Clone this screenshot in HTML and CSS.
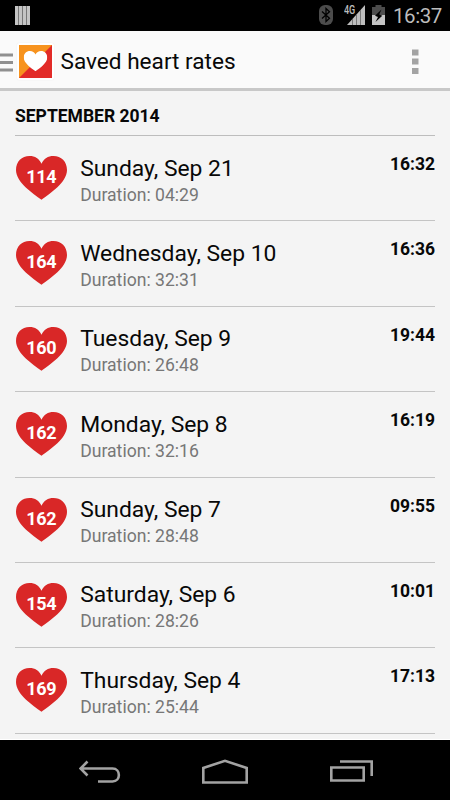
FILE: index.html
```html
<!DOCTYPE html>
<html lang="en">
<head>
  <meta charset="UTF-8" />
  <meta name="viewport" content="width=device-width, initial-scale=1" />
  <title>Saved heart rates</title>
  <link rel="stylesheet" href="styles.css">
</head>
<body>

  <svg class="defs" width="0" height="0">
    <symbol id="heart" viewBox="0 0 51 44">
      <path d="M25.5 43.7C17 37.5 0 26.500 0 14C0 5.500 5.800 0 13.500 0C19 0 23.300 2.600 25.500 7.800C27.700 2.600 32 0 37.500 0C45.200 0 51 5.500 51 14C51 26.500 34 37.500 25.500 43.700Z" />
    </symbol>
  </svg>

  <div class="status-bar">
    <svg class="bars" width="15" height="19" viewBox="0 0 15 19">
      <path fill="#777" d="M0 0h15v19H0z" />
      <path fill="#c4c4c4" d="M0 0h3v19H0zM4 0h3v19H4zM8 0h3v19H8zM12 0h3v19h-3z" />
    </svg>
    <svg class="bluetooth" width="14" height="20" viewBox="0 0 14 20">
      <rect width="14" height="20" rx="6" fill="#4c4c4c" />
      <path d="M3 6.500L10.500 13.200L7 16.500V3.500L10.500 6.800L3 13.500" fill="none" stroke="#000" stroke-width="1.300" />
    </svg>
    <div class="signal">
      <span class="network">4G</span>
      <svg width="18" height="20" viewBox="0 0 18 20">
        <path fill="#bdbdbd" d="M18 0V20H0Z" />
        <path stroke="#777" d="M5.500 14V20M9.500 10V20M13.500 5V20" />
      </svg>
    </div>
    <svg class="battery" width="13" height="20" viewBox="0 0 13 20">
      <path fill="#4c4c4c" d="M3.500 0h6v2H13v8H0V2h3.500z" />
      <path fill="#c4c4c4" d="M0 10h13v10H0z" />
      <path d="M9.500 4.500L3 10.800L6 12L3.500 17L10.300 10.700L7.200 9.500Z" />
    </svg>
    <span class="clock">16:37</span>
  </div>

  <div class="action-bar">
    <svg class="drawer" width="13" height="19" viewBox="0 0 13 19">
      <path fill="#909090" d="M0 0.500h13v3H0zM0 8h13v3H0zM0 15.500h13v3H0z" />
    </svg>
    <div class="logo">
      <svg width="33" height="33" viewBox="0 0 33 33">
        <path fill="#e22b28" d="M0 0h33v33H0z" />
        <path fill="#f7931e" d="M0 0h33L0 33z" />
        <use href="#heart" x="4.700" y="6" width="23.600" height="20.300" fill="#fff" />
      </svg>
    </div>
    <h1>Saved heart rates</h1>
    <svg class="overflow" width="7" height="26" viewBox="0 0 7 26">
      <path fill="#a3a3a3" d="M0 0.500h6.500v6H0zM0 9.500h6.500v6H0zM0 19h6.500v6H0z" />
    </svg>
  </div>

  <div class="list">
    <h2>SEPTEMBER 2014</h2>

    <div class="item">
      <div class="rate"><svg><use href="#heart" /></svg><span>114</span></div>
      <div class="info"><p class="day">Sunday, Sep 21</p><p class="duration">Duration: 04:29</p></div>
      <span class="time">16:32</span>
    </div>
    <div class="item">
      <div class="rate"><svg><use href="#heart" /></svg><span>164</span></div>
      <div class="info"><p class="day">Wednesday, Sep 10</p><p class="duration">Duration: 32:31</p></div>
      <span class="time">16:36</span>
    </div>
    <div class="item">
      <div class="rate"><svg><use href="#heart" /></svg><span>160</span></div>
      <div class="info"><p class="day">Tuesday, Sep 9</p><p class="duration">Duration: 26:48</p></div>
      <span class="time">19:44</span>
    </div>
    <div class="item">
      <div class="rate"><svg><use href="#heart" /></svg><span>162</span></div>
      <div class="info"><p class="day">Monday, Sep 8</p><p class="duration">Duration: 32:16</p></div>
      <span class="time">16:19</span>
    </div>
    <div class="item">
      <div class="rate"><svg><use href="#heart" /></svg><span>162</span></div>
      <div class="info"><p class="day">Sunday, Sep 7</p><p class="duration">Duration: 28:48</p></div>
      <span class="time">09:55</span>
    </div>
    <div class="item">
      <div class="rate"><svg><use href="#heart" /></svg><span>154</span></div>
      <div class="info"><p class="day">Saturday, Sep 6</p><p class="duration">Duration: 28:26</p></div>
      <span class="time">10:01</span>
    </div>
    <div class="item">
      <div class="rate"><svg><use href="#heart" /></svg><span>169</span></div>
      <div class="info"><p class="day">Thursday, Sep 4</p><p class="duration">Duration: 25:44</p></div>
      <span class="time">17:13</span>
    </div>
  </div>

  <div class="nav-bar">
    <svg width="42" height="23" viewBox="0 0 42 23">
      <path d="M1.500 8.500H33.500C42 8.500 42 21.500 33.500 21.500H19M8.500 1.500L1.500 8.500L8.500 15.500" />
    </svg>
    <svg width="46" height="25" viewBox="0 0 46 25">
      <path d="M1.300 23.500V9L23 1.800L44.700 9V23.500Z" />
    </svg>
    <svg width="43" height="22" viewBox="0 0 43 22">
      <path d="M1.300 7.500H33.700V20.500H1.300ZM10 1.500H41.700V16" />
    </svg>
  </div>

</body>
</html>
```

FILE: styles.css
```css
* {
  margin: 0;
  padding: 0;
  box-sizing: border-box;
}

body {
  width: 450px;
  height: 800px;
  display: flex;
  flex-direction: column;
  overflow: hidden;
  background: #f4f4f4;
  color: #080808;
  font-family: Roboto, "Liberation Sans", sans-serif;
}

svg {
  display: block;
  flex: none;
}

.defs {
  position: absolute;
}

/* Status bar */
.status-bar {
  flex: none;
  height: 31px;
  display: flex;
  align-items: flex-start;
  padding: 5px 8px 0 15px;
  background: #000;
  color: #bdbdbd;
}

.bars {
  margin-top: 1px;
}

.bluetooth {
  margin-left: 289px;
}

.signal {
  position: relative;
  margin-left: 14px;
}

.network {
  position: absolute;
  left: -3px;
  top: 0;
  font-size: 12px;
  line-height: 11px;
  font-weight: 500;
  transform: scaleX(0.75);
  transform-origin: 0 0;
}

.battery {
  margin-left: 7px;
}

.clock {
  margin-left: auto;
  font-size: 20.500px;
  line-height: 23px;
  letter-spacing: -0.400px;
}

/* Action bar */
.action-bar {
  flex: none;
  height: 60px;
  display: flex;
  align-items: center;
  padding-right: 31px;
  background: #fafafa;
  border-bottom: 3px solid #c8c8c8;
}

.drawer {
  margin-top: 5px;
}

.logo {
  margin: 4px 0 0 4px;
  padding: 2px;
  border-radius: 2px;
  background: #fff;
  box-shadow: 0 0 1px #ddd;
}

h1 {
  margin: 5px 0 0 6.500px;
  font-size: 22.600px;
  line-height: 26px;
  font-weight: 400;
}

.overflow {
  margin: 4px 0 0 auto;
}

/* Saved measurements */
.list {
  flex: 1;
  padding: 0 15px;
  overflow: hidden;
  border-bottom: 1px solid #fff;
}

h2 {
  height: 45px;
  font-size: 17.500px;
  line-height: 50px;
  font-weight: 700;
  border-bottom: 1px solid #bdbdbd;
}

.item {
  height: 85.400px;
  display: flex;
  align-items: flex-start;
  border-bottom: 1px solid #c4c4c4;
}

.rate {
  width: 51px;
  height: 44px;
  margin: 20px 0 0 0.700px;
  display: grid;
}

.rate svg,
.rate span {
  grid-area: 1 / 1;
}

.rate svg {
  width: 51px;
  height: 44px;
  fill: #d92727;
}

.rate span {
  color: #fff;
  font-size: 18px;
  line-height: 42px;
  font-weight: 700;
  letter-spacing: -0.300px;
  text-align: center;
}

.info {
  margin: 17.500px 0 0 13.500px;
}

.day {
  font-size: 22.850px;
  line-height: 29px;
}

.duration {
  font-size: 17.600px;
  line-height: 24px;
  color: #777;
}

.time {
  margin: 17px 0 0 auto;
  font-size: 17.500px;
  line-height: 22px;
  font-weight: 700;
}

/* Navigation bar */
.nav-bar {
  flex: none;
  height: 60px;
  display: flex;
  justify-content: center;
  align-items: center;
  gap: 81.500px;
  padding: 2px 0 0 1px;
  background: #000;
}

.nav-bar path {
  fill: none;
  stroke: #a3a3a3;
  stroke-width: 2.600;
}
```
